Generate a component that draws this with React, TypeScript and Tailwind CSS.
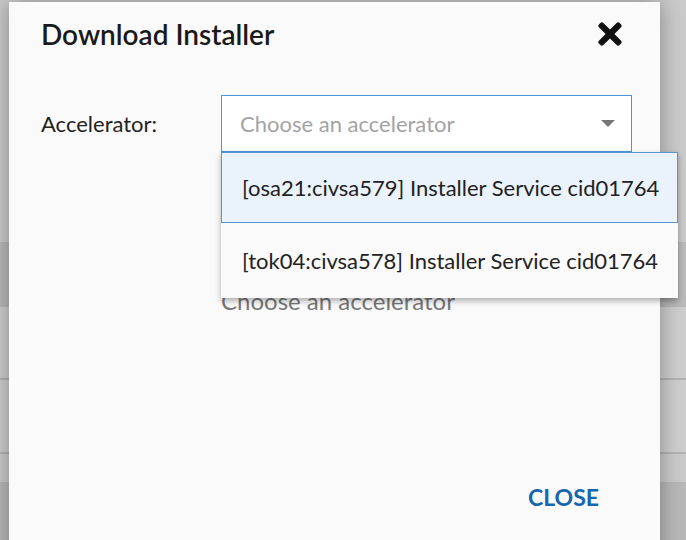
import { FaTimes } from "react-icons/fa";

const options = [
  "[osa21:civsa579] Installer Service cid01764",
  "[tok04:civsa578] Installer Service cid01764",
];

function Backdrop() {
  return (
    <div className="flex flex-col h-[540px]">
      <div className="h-[242px] bg-[#cbcbcb]" />
      <div className="h-[65px] bg-[#bababa]" />
      <div className="h-[71px] bg-[#cecece]" />
      <div className="h-[2px] bg-[#b3b3b3]" />
      <div className="h-[72px] bg-[#cecece]" />
      <div className="h-[2px] bg-[#b3b3b3]" />
      <div className="h-[28px] bg-[#cbcbcb]" />
      <div className="flex-1 bg-[#b9b9b9]" />
    </div>
  );
}

export default function App() {
  return (
    <div className="relative w-[686px] h-[540px] overflow-hidden font-['Lato',sans-serif]">
      <Backdrop />

      <div className="absolute left-[9px] top-[2px] w-[651px] h-[580px] bg-[#fafafa] shadow-[0_0_22px_rgba(0,0,0,0.35)] flex flex-col">
        <div className="h-[64px] flex items-center justify-between pl-[32px] pr-[33px]">
          <h2 className="text-[28px] font-semibold text-[#1a1a1a]">Download Installer</h2>
          <FaTimes size={34} className="text-[#111]" />
        </div>

        <div className="mt-[29px] flex items-center pl-[32px]">
          <label className="w-[180px] text-[22px] text-[#222]">Accelerator:</label>
          <div className="relative">
            <div className="w-[411px] h-[57px] bg-white border border-[#4d94d8] flex items-center justify-between pl-[18px] pr-[16px]">
              <span className="text-[22px] text-[#a3a3a3]">Choose an accelerator</span>
              <svg width="14" height="7" viewBox="0 0 14 7">
                <polygon points="0,0 14,0 7,7" fill="#777" />
              </svg>
            </div>

            <ul className="absolute left-0 top-full z-10 w-[457px] bg-[#fafafa] shadow-[0_3px_6px_rgba(0,0,0,0.3)]">
              {options.map((o, i) => (
                <li
                  key={o}
                  className={
                    i === 0
                      ? "h-[71px] flex items-center pl-[20px] text-[22px] text-[#222] bg-[#eaf2fb] border border-[#5b95d0]"
                      : "h-[75px] flex items-center pl-[21px] text-[22px] text-[#222]"
                  }
                >
                  {o}
                </li>
              ))}
            </ul>
          </div>
        </div>

        <div className="mt-[131px] pl-[212px] text-[24px] text-[#777]">Choose an accelerator</div>

        <div className="mt-[161px] flex justify-end pr-[61px]">
          <button className="text-[23px] font-bold text-[#1565b0]">CLOSE</button>
        </div>
      </div>
    </div>
  );
}
